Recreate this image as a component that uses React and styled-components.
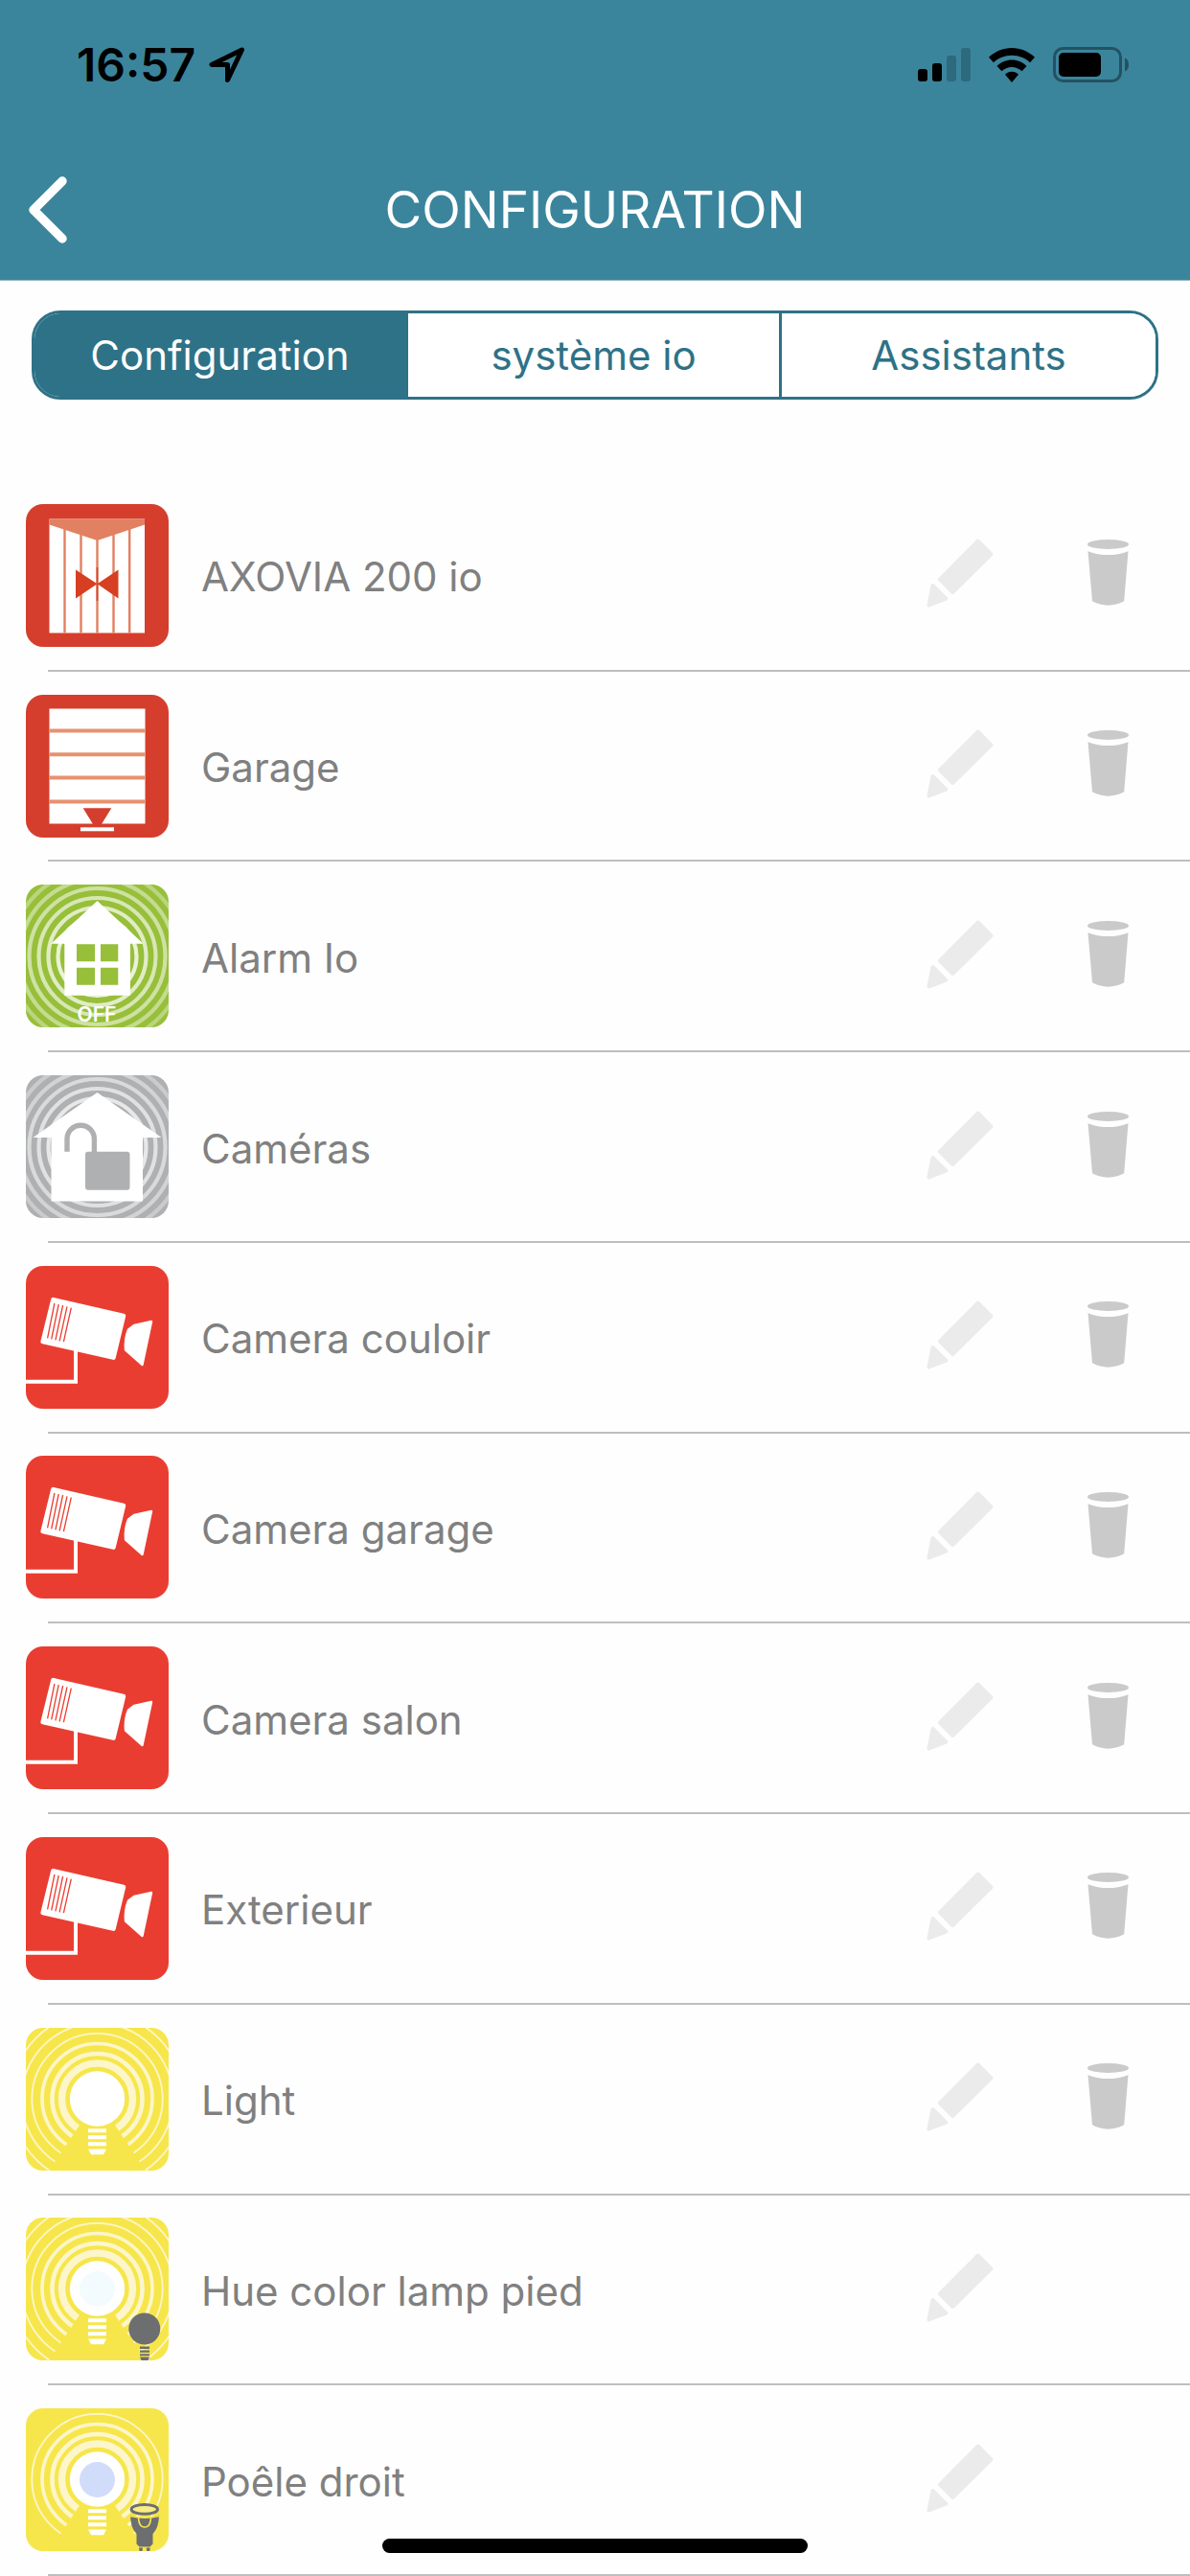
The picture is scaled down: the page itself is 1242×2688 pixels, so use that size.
import React, { useState } from 'react';
import styled, { createGlobalStyle } from 'styled-components';

const GlobalStyle = createGlobalStyle`
    * {
        box-sizing: border-box;
    }

    body {
        margin: 0;
        background: #fefefe;
        font-family: Inter, "Liberation Sans", sans-serif;
    }

    button {
        border: none;
        background: none;
        padding: 0;
        font-family: inherit;
        cursor: pointer;
    }

    svg {
        display: block;
    }
`;

const Page = styled.div`
    display: flex;
    flex-direction: column;
    min-height: 100vh;
`;

const Header = styled.header`
    background: #3b859c;
    border-bottom: 1px solid #8fb3bf;
`;

const StatusBar = styled.div`
    display: flex;
    justify-content: space-between;
    align-items: center;
    height: 146px;
    padding: 0 64px 10px 80px;
`;

const StatusGroup = styled.div`
    display: flex;
    align-items: center;
    gap: ${({ $gap }) => $gap}px;
`;

const Time = styled.span`
    font-size: 48px;
    font-weight: 600;
    line-height: 56px;
`;

const NavBar = styled.div`
    display: grid;
    grid-template-columns: 100px 1fr 100px;
    align-items: center;
    height: 146px;
`;

const BackButton = styled.button`
    display: flex;
    align-items: center;
    height: 100px;
    padding-left: 30px;
`;

const Title = styled.h1`
    margin: 0;
    color: #fff;
    font-size: 53px;
    font-weight: 400;
    line-height: 64px;
    text-align: center;
`;

const Tabs = styled.nav`
    display: grid;
    grid-template-columns: repeat(3, 1fr);
    height: 93px;
    margin: 31px 33px 85px;
    border: 3px solid #2e7287;
    border-radius: 30px;
    overflow: hidden;
`;

const Tab = styled.button`
    background: ${({ $active }) => ($active ? '#2e7287' : '#fff')};
    color: ${({ $active }) => ($active ? '#fff' : '#2e7287')};
    font-size: 42px;
    font-weight: 400;

    &:not(:last-child) {
        border-right: 3px solid #2e7287;
    }
`;

const DeviceList = styled.ul`
    flex: 1;
    display: grid;
    grid-auto-rows: 1fr;
    margin: 0;
    padding: 0;
    list-style: none;
`;

const DeviceItem = styled.li`
    display: flex;
    flex-direction: column;
    min-height: 180px;
`;

const DeviceRow = styled.div`
    flex: 1;
    display: flex;
    align-items: center;
    padding: 0 64px 0 27px;
`;

const DeviceName = styled.span`
    flex: 1;
    padding: 4px 0 0 34px;
    color: #808080;
    font-size: 42px;
    line-height: 52px;
`;

const Separator = styled.div`
    height: 2px;
    margin-left: 50px;
    background: #bebebe;
`;

const Actions = styled.div`
    display: grid;
    grid-template-columns: 70px 43px;
    align-items: center;
    gap: 98px;
    padding-bottom: 4px;
`;

const HomeIndicator = styled.div`
    position: fixed;
    bottom: 24px;
    left: 50%;
    width: 444px;
    height: 15px;
    margin-left: -222px;
    border-radius: 8px;
    background: #000;
`;

const TileSvg = styled.svg`
    width: 149px;
    height: 149px;
    border-radius: 18px;
    background: ${({ $color }) => $color};
`;

const Tile = ({ color, children }) => (
    <TileSvg viewBox="0 0 149 149" $color={color} aria-hidden="true">{children}</TileSvg>
);

const GateIcon = () => (
    <Tile color="#d53e2d">
        <rect x="24.5" y="15.5" width="99.5" height="119" fill="#fff" />
        <path d="M24.5 15.5H124V21.5L74.5 38L24.5 21.5Z" fill="#e28062" />
        <path d="M40.5 26V134.5M57.5 32V134.5M74.5 37V134.5M91.5 32V134.5M108.2 26V134.5" stroke="#e28062" strokeWidth="2.4" />
        <path d="M52 68.5L74.5 83.3L96.5 68.5V98.5L74.5 83.3L52 98.5Z" fill="#d63f22" />
        <path d="M74.5 66V101" stroke="#d63f22" strokeWidth="1.5" />
    </Tile>
);

const GarageIcon = () => (
    <Tile color="#d53e2d">
        <rect x="24.5" y="14.5" width="100" height="120" fill="#fff" />
        <path d="M24.5 37.6H124.5M24.5 62.3H124.5M24.5 86.6H124.5M24.5 111.4H124.5" stroke="#e6926f" strokeWidth="4" />
        <path d="M59.7 118.3H89.3L79 135H70Z" fill="#d53e2d" />
        <rect x="57" y="138.3" width="35" height="4" fill="#fff" />
    </Tile>
);

// faded rings behind the alarm and camera houses
const Waves = () => (
    <g fill="none" stroke="#fff" strokeWidth="4.2">
        {[41, 51, 61, 71, 81, 91, 101].map((r, i) => (
            <circle key={r} cx="74.5" cy="75" r={r} opacity={0.8 - i * 0.09} />
        ))}
    </g>
);

const AlarmIcon = () => (
    <Tile color="#97bf3a">
        <Waves />
        <path d="M74.5 17L122.5 61.7H109V115.7H40.3V61.7H26.3Z" fill="#fff" />
        <path d="M53 62.3H72V80.3H53ZM78 62.3H96.3V80.3H78ZM53 86.7H72V104.7H53ZM78 86.7H96.3V104.7H78Z" fill="#97bf3a" />
        <text x="74" y="142.5" fill="#fff" fontSize="21" fontWeight="600" textAnchor="middle">OFF</text>
    </Tile>
);

const CamerasIcon = () => (
    <Tile color="#afb0b2">
        <Waves />
        <path d="M74.5 18L141.5 65H122V131.5H26.5V65H7.5Z" fill="#fff" />
        <rect x="62" y="79.7" width="46.5" height="40" rx="3" fill="#afb0b2" />
        <path d="M43 79.7V66.5A14.2 14.2 0 0 1 71.4 66.5V81" fill="none" stroke="#afb0b2" strokeWidth="5.4" />
    </Tile>
);

const CameraIcon = () => (
    <Tile color="#ea3d31">
        <path d="M28.6 35.4L101.7 52.2L91.3 95.4L17.9 78.9Z" fill="#fff" stroke="#fff" strokeWidth="5" strokeLinejoin="round" />
        <path d="M29.9 39L22.6 75.4M34.2 40L26.7 76.4M38.6 41L30.9 77.4M43 42.3L35.1 78.3M47.3 43.7L39.4 79.2" stroke="#ea3d31" strokeWidth="1.3" />
        <path d="M113 62L131 58L121.5 103L104 87.5Q103 76 107 66.5Z" fill="#fff" stroke="#fff" strokeWidth="2.4" strokeLinejoin="round" />
        <path d="M0 120.7H52V86" fill="none" stroke="#fff" strokeWidth="4" />
    </Tile>
);

const Lamp = ({ wide, glow, children }) => (
    <Tile color="#f6e64b">
        <g fill="none" stroke="#fdf6cb">
            <circle cx="74.5" cy="74" r="37" strokeWidth="7.4" />
            <circle cx="74.5" cy="74" r="47" strokeWidth="4.6" />
            <circle cx="74.5" cy="74" r="57.5" strokeWidth="3.6" />
            <circle cx="74.5" cy="74" r="68.2" strokeWidth="1.8" />
            {wide && <circle cx="74.5" cy="74" r="79" strokeWidth="1.8" />}
            {wide && <circle cx="74.5" cy="74" r="90" strokeWidth="1.8" />}
        </g>
        <path d="M74.5 74L23.5 150H125.5Z" fill="#f6e64b" />
        <circle cx="74.5" cy="74" r="28.7" fill="#fff" />
        {glow && <circle cx="74.5" cy="74.5" r="18.5" fill={glow} />}
        <path d="M65 105.3H84V109.3H65ZM65 112.3H84V116.3H65ZM65 119.2H84V123.2H65ZM65 126.6H84L81 132.3H68.2Z" fill="#fff" />
        {children}
    </Tile>
);

const LightIcon = () => <Lamp wide />;

const HueIcon = () => (
    <Lamp wide glow="#f3fbfe">
        <circle cx="123.8" cy="116" r="16.5" fill="#6d6e70" />
        <path d="M119 134.5H129V137H119ZM119 138.6H129V140.8H119ZM119 142.2H129V144.2H119ZM119 145.6H129L127.5 149H120.5Z" fill="#6d6e70" />
    </Lamp>
);

const SpotIcon = () => (
    <Lamp glow="#d1dcfb">
        <path d="M109 111.4Q124 117 139 111.4Q139 124 132.5 131V141.5L129.5 144.5H118.5L115.5 141.5V131Q109 124 109 111.4Z" fill="#6d6e70" />
        <path d="M117.5 112.5Q117.5 124 124 124Q130.5 124 130.5 112.5" fill="none" stroke="#f6e64b" strokeWidth="1.6" />
        <path d="M109 112.4Q124 116 139 112.4" fill="none" stroke="#f6e64b" strokeWidth="1.5" />
        <ellipse cx="123.8" cy="105.4" rx="13.7" ry="4.9" fill="#f8ec84" stroke="#6d6e70" strokeWidth="3" />
        <path d="M118 145.5H122L121.5 149H118.5ZM125.7 145.5H129.7L129.2 149H126.2Z" fill="#6d6e70" />
    </Lamp>
);

const PencilIcon = () => (
    <svg width="70" height="72" viewBox="0 0 70 72" fill="#ebebeb" stroke="#ebebeb" strokeWidth="4" strokeLinejoin="round" aria-hidden="true">
        <path d="M53.7 2.500L67.500 16.300L27.300 56L14 42.500Z" />
        <path d="M6.500 49L20.300 62.600L2.500 69.500Z" />
    </svg>
);

const TrashIcon = () => (
    <svg width="43" height="70" viewBox="0 0 43 70" fill="#cacaca" aria-hidden="true">
        <ellipse cx="21.5" cy="5" rx="21.5" ry="5" />
        <path d="M0.5 12.2Q21.5 20 42.5 12.2L38.2 64.3Q21.5 73 5 64.3Z" />
    </svg>
);

const ChevronIcon = () => (
    <svg width="40" height="70" viewBox="0 0 40 70" fill="none" stroke="#fff" strokeWidth="9.5" strokeLinecap="round" strokeLinejoin="round" aria-hidden="true">
        <path d="M35 5L5 35L35 65" />
    </svg>
);

const LocationIcon = () => (
    <svg width="38" height="38" viewBox="0 0 38 38" fill="none" stroke="#000" strokeWidth="5" strokeLinejoin="round" aria-hidden="true">
        <path d="M34.500 3L3 18.500H19.500V34.500Z" />
    </svg>
);

const SignalIcon = () => (
    <svg width="55" height="36" viewBox="0 0 55 36" aria-hidden="true">
        <rect x="0" y="22" width="10" height="13" rx="3" />
        <rect x="15" y="16" width="10" height="19" rx="3" />
        <rect x="30" y="8" width="10" height="27" rx="3" fill="#2d6a7e" />
        <rect x="45" y="0" width="10" height="35" rx="3" fill="#2d6a7e" />
    </svg>
);

const WifiIcon = () => (
    <svg width="48" height="36" viewBox="0 0 48 36" aria-hidden="true">
        <path d="M24 0C33 0 41.500 3.600 48 9.800L43 15.200C38 10.500 31.400 7.700 24 7.700S10 10.500 5 15.200L0 9.800C6.500 3.600 15 0 24 0Z" />
        <path d="M24 12.500C30 12.500 35.400 14.900 39.500 18.900L34.500 24.300C31.700 21.700 28 20 24 20S16.300 21.700 13.500 24.300L8.500 18.900C12.600 14.900 18 12.500 24 12.500Z" />
        <path d="M24 24.800C26.700 24.800 29.200 25.900 31 27.800L24 36L17 27.800C18.800 25.900 21.300 24.800 24 24.800Z" />
    </svg>
);

const BatteryIcon = () => (
    <svg width="79" height="38" viewBox="0 0 79 38" aria-hidden="true">
        <rect x="1.500" y="1.500" width="69" height="34" rx="9" fill="none" stroke="#225262" strokeWidth="3" />
        <rect x="6" y="6" width="44" height="25" rx="5" />
        <path d="M75 11.500Q79 13 79 18.500T75 25.500Z" fill="#225262" />
    </svg>
);

const devices = [
    { name: 'AXOVIA 200 io', Icon: GateIcon, removable: true },
    { name: 'Garage', Icon: GarageIcon, removable: true },
    { name: 'Alarm Io', Icon: AlarmIcon, removable: true },
    { name: 'Caméras', Icon: CamerasIcon, removable: true },
    { name: 'Camera couloir', Icon: CameraIcon, removable: true },
    { name: 'Camera garage', Icon: CameraIcon, removable: true },
    { name: 'Camera salon', Icon: CameraIcon, removable: true },
    { name: 'Exterieur', Icon: CameraIcon, removable: true },
    { name: 'Light', Icon: LightIcon, removable: true },
    { name: 'Hue color lamp pied', Icon: HueIcon, removable: false },
    { name: 'Poêle droit', Icon: SpotIcon, removable: false },
];

const tabs = ['Configuration', 'système io', 'Assistants'];

const App = () => {

    const [activeTab, setActiveTab] = useState(tabs[0]);

  return (
    <Page>
      <GlobalStyle />
      <Header>
        <StatusBar>
          <StatusGroup $gap={14}>
            <Time>16:57</Time>
            <LocationIcon />
          </StatusGroup>
          <StatusGroup $gap={19}>
            <SignalIcon />
            <WifiIcon />
            <BatteryIcon />
          </StatusGroup>
        </StatusBar>
        <NavBar>
          <BackButton type="button" aria-label="Retour">
            <ChevronIcon />
          </BackButton>
          <Title>CONFIGURATION</Title>
        </NavBar>
      </Header>

      <Tabs>
        {tabs.map((tab) => (
          <Tab key={tab} type="button" $active={tab === activeTab} onClick={() => setActiveTab(tab)}>
            {tab}
          </Tab>
        ))}
      </Tabs>

      <DeviceList>
        {devices.map(({ name, Icon, removable }) => (
          <DeviceItem key={name}>
            <DeviceRow>
              <Icon />
              <DeviceName>{name}</DeviceName>
              <Actions>
                <button type="button" aria-label={`Modifier ${name}`}><PencilIcon /></button>
                {removable && <button type="button" aria-label={`Supprimer ${name}`}><TrashIcon /></button>}
              </Actions>
            </DeviceRow>
            <Separator />
          </DeviceItem>
        ))}
      </DeviceList>
      <HomeIndicator />
    </Page>
  );
};

export default App;
